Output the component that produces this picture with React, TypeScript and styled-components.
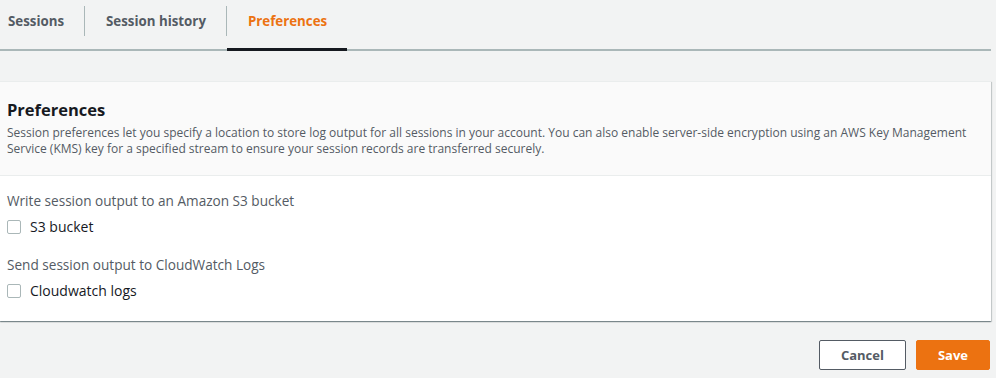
import React, { useState } from 'react'
import styled, { createGlobalStyle } from 'styled-components'

const GlobalStyle = createGlobalStyle`
  html, body {
    margin: 0;
    padding: 0;
    background: #f2f3f3;
    font-family: 'Open Sans', 'Noto Sans', Arial, sans-serif;
    color: #16191f;
  }
`

const Page = styled.div`
  width: 991px;
  padding-right: 5px;
`

const TabBar = styled.div`
  display: flex;
  height: 49px;
  border-bottom: 2px solid #aab7b8;
`

const Tab = styled.button<{ active?: boolean; first?: boolean }>`
  display: flex;
  align-items: flex-start;
  padding: 12px 20px 0 ${({ first }) => (first ? '8px' : '21px')};
  border: none;
  background: none;
  font-family: inherit;
  font-size: 13.3px;
  font-weight: 700;
  color: ${({ active }) => (active ? '#ec7211' : '#545b64')};
  cursor: pointer;
  border-bottom: 3px solid ${({ active }) => (active ? '#16191f' : 'transparent')};
  margin-bottom: -2px;
`

const Divider = styled.span`
  width: 1px;
  height: 30px;
  margin-top: 6px;
  background: #aab7b8;
`

const Panel = styled.section`
  margin-top: 30px;
  background: #fff;
  box-shadow: 0 1px 1px 0 rgba(0, 28, 36, 0.3), 1px 1px 1px 0 rgba(0, 28, 36, 0.15),
    -1px 1px 1px 0 rgba(0, 28, 36, 0.15);
  border-top: 1px solid #eaeded;
`

const PanelHeader = styled.header`
  background: #fafafa;
  border-bottom: 1px solid #eaeded;
  padding: 17px 7px 18px;
`

const Title = styled.h2`
  margin: 0 0 4px;
  font-size: 16.5px;
  font-weight: 700;
  line-height: 22px;
`

const Description = styled.p`
  margin: 0;
  font-size: 12px;
  line-height: 16px;
  color: #545b64;
`

const PanelBody = styled.div`
  padding: 15px 7px 20px;
  display: flex;
  flex-direction: column;
  gap: 18px;
`

const Field = styled.div`
  display: flex;
  flex-direction: column;
  gap: 6px;
`

const FieldLabel = styled.div`
  font-size: 13.6px;
  line-height: 20px;
  color: #545b64;
`

const CheckRow = styled.label`
  display: flex;
  align-items: center;
  gap: 9px;
  font-size: 14px;
  line-height: 20px;
  color: #16191f;
  cursor: pointer;
`

const Box = styled.span<{ checked: boolean }>`
  width: 12px;
  height: 12px;
  border: 1px solid #aab7b8;
  border-radius: 2px;
  background: ${({ checked }) => (checked ? '#0073bb' : '#fff')};
`

const Footer = styled.div`
  display: flex;
  justify-content: flex-end;
  gap: 10px;
  padding: 19px 1px 0 0;
`

const Button = styled.button<{ primary?: boolean }>`
  height: 30px;
  padding: 0 21px;
  border-radius: 2px;
  font-family: inherit;
  font-size: 13px;
  font-weight: 700;
  cursor: pointer;
  border: 1px solid ${({ primary }) => (primary ? '#ec7211' : '#545b64')};
  background: ${({ primary }) => (primary ? '#ec7211' : '#fff')};
  color: ${({ primary }) => (primary ? '#fff' : '#545b64')};
`

const Checkbox = ({ label }: { label: string }) => {
  const [checked, setChecked] = useState(false)
  return (
    <CheckRow onClick={() => setChecked(c => !c)}>
      <Box checked={checked} />
      {label}
    </CheckRow>
  )
}

export default function App() {
  return (
    <Page>
      <GlobalStyle />
      <TabBar>
        <Tab first>Sessions</Tab>
        <Divider />
        <Tab>Session history</Tab>
        <Divider />
        <Tab active>Preferences</Tab>
      </TabBar>
      <Panel>
        <PanelHeader>
          <Title>Preferences</Title>
          <Description>
            Session preferences let you specify a location to store log output for all sessions in
            your account. You can also enable server-side encryption using an AWS Key Management
            Service (KMS) key for a specified stream to ensure your session records are transferred
            securely.
          </Description>
        </PanelHeader>
        <PanelBody>
          <Field>
            <FieldLabel>Write session output to an Amazon S3 bucket</FieldLabel>
            <Checkbox label="S3 bucket" />
          </Field>
          <Field>
            <FieldLabel>Send session output to CloudWatch Logs</FieldLabel>
            <Checkbox label="Cloudwatch logs" />
          </Field>
        </PanelBody>
      </Panel>
      <Footer>
        <Button>Cancel</Button>
        <Button primary>Save</Button>
      </Footer>
    </Page>
  )
}
